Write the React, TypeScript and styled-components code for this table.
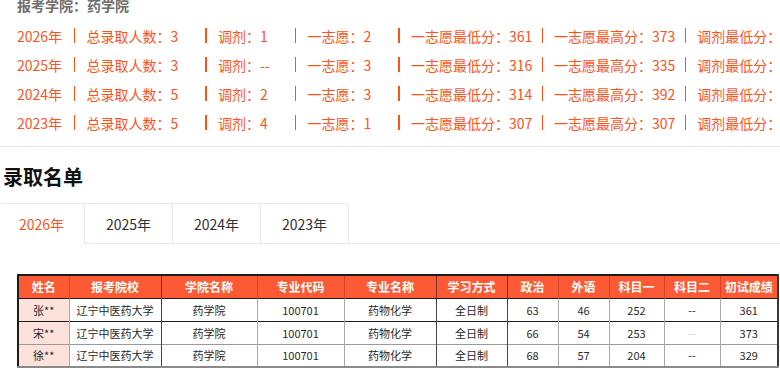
import React from "react";
import styled, { createGlobalStyle } from "styled-components";

const Global = createGlobalStyle`
  html, body { margin: 0; padding: 0; background: #fff; }
  body { width: 780px; height: 371px; overflow: hidden; font-family: "Noto Sans CJK SC", "Noto Sans", sans-serif; }
  * { box-sizing: border-box; }
`;

const ORANGE = "#ff5219";

const Page = styled.div`
  width: 780px;
`;

const Info = styled.div`
  padding-left: 17px;
`;

const College = styled.div`
  margin-top: -5px;
  height: 20px;
  line-height: 20px;
  font-size: 14px;
  font-weight: 700;
  color: #6e6e6e;
`;

const StatList = styled.div`
  margin-top: 6px;
`;

const StatRow = styled.div`
  display: flex;
  align-items: center;
  height: 29px;
  font-size: 14px;
  color: ${ORANGE};
  white-space: nowrap;
`;

const Item = styled.span<{ $w?: number }>`
  display: inline-block;
  min-width: ${(p) => (p.$w ? `${p.$w}px` : "0")};
  line-height: 20px;
`;

const Sep = styled.span`
  display: inline-block;
  width: 1.5px;
  height: 15px;
  margin: 0 11px;
  background: ${ORANGE};
`;

const Divider = styled.div`
  margin-top: 9px;
  height: 1px;
  background: #e8e8e8;
`;

const Title = styled.h2`
  margin: 16px 0 0;
  padding-left: 3px;
  height: 28px;
  line-height: 28px;
  font-size: 20px;
  font-weight: 700;
  color: #111;
`;

const TabBar = styled.div`
  display: flex;
  margin-top: 12px;
`;

const TabNav = styled.div`
  display: flex;
  margin-left: -2px;
  border: 1px solid #e4e7ed;
  border-bottom: none;
  border-radius: 4px 4px 0 0;
`;

const Tab = styled.div<{ $active?: boolean; $first?: boolean }>`
  width: ${(p) => (p.$first ? 85 : 88)}px;
  height: 40px;
  display: flex;
  align-items: center;
  justify-content: center;
  font-size: 14px;
  color: ${(p) => (p.$active ? ORANGE : "#303133")};
  border-left: ${(p) => (p.$first ? "none" : "1px solid #e4e7ed")};
  border-bottom: 1px solid ${(p) => (p.$active ? "#fff" : "#e4e7ed")};
`;

const TabFill = styled.div`
  flex: 1;
  border-bottom: 1px solid #e4e7ed;
`;

const Table = styled.table`
  margin: 30px 0 0 17px;
  border-collapse: collapse;
  table-layout: fixed;
  width: 760px;
  border-top: 2px solid #1c1c1c;
  border-left: 2px solid #1c1c1c;
  border-right: 2px solid #3a3a3a;
  border-bottom: 2px solid #8a8a8a;
`;

const Th = styled.th<{ $strong?: boolean }>`
  height: 23px;
  padding: 0;
  background: #fb5a35;
  color: #fff;
  font-size: 12px;
  font-weight: 700;
  text-align: center;
  border-left: 1px solid ${(p) => (p.$strong ? "#7a3020" : "#d2482a")};
`;

const Tr = styled.tr<{ $line: string }>`
  border-top: 1.5px solid ${(p) => p.$line};
`;

const Td = styled.td<{ $strong?: boolean; $name?: boolean; $faint?: boolean }>`
  height: 23px;
  padding: 0;
  text-align: center;
  font-size: 11px;
  color: ${(p) => (p.$faint ? "#d0d0d0" : "#2a2a2a")};
  background: ${(p) => (p.$name ? "#fde1db" : "#fff")};
  border-left: ${(p) => (p.$strong ? "1.5px solid #444" : "1px solid #a8a8a8")};
`;

const columns = [
  { title: "姓名", w: 51 },
  { title: "报考院校", w: 92 },
  { title: "学院名称", w: 96, strong: true },
  { title: "专业代码", w: 87 },
  { title: "专业名称", w: 92 },
  { title: "学习方式", w: 71, strong: true },
  { title: "政治", w: 51, strong: true },
  { title: "外语", w: 51 },
  { title: "科目一", w: 55 },
  { title: "科目二", w: 56 },
  { title: "初试成绩", w: 58 },
];

const stats = [
  { y: "2026年", total: 3, adj: "1", first: 2, low: 361, high: 373 },
  { y: "2025年", total: 3, adj: "--", first: 3, low: 316, high: 335 },
  { y: "2024年", total: 5, adj: "2", first: 3, low: 314, high: 392 },
  { y: "2023年", total: 5, adj: "4", first: 1, low: 307, high: 307 },
];

const rows = [
  { name: "张**", p: 63, f: 46, s1: 252, s2: "--", score: 361, line: "#1c1c1c", faint: false },
  { name: "宋**", p: 66, f: 54, s1: 253, s2: "--", score: 373, line: "#1c1c1c", faint: true },
  { name: "徐**", p: 68, f: 57, s1: 204, s2: "--", score: 329, line: "#9a9a9a", faint: false },
];

export default function App() {
  return (
    <Page>
      <Global />
      <Info>
        <College>报考学院：药学院</College>
        <StatList>
          {stats.map((s) => (
            <StatRow key={s.y}>
              <Item $w={46}>{s.y}</Item>
              <Sep />
              <Item $w={108}>总录取人数：{s.total}</Item>
              <Sep />
              <Item $w={66}>调剂：{s.adj}</Item>
              <Sep />
              <Item $w={80}>一志愿：{s.first}</Item>
              <Sep />
              <Item>一志愿最低分：{s.low}</Item>
              <Sep />
              <Item>一志愿最高分：{s.high}</Item>
              <Sep />
              <Item>调剂最低分：</Item>
            </StatRow>
          ))}
        </StatList>
      </Info>
      <Divider />
      <Title>录取名单</Title>
      <TabBar>
        <TabNav>
          <Tab $active $first>2026年</Tab>
          <Tab>2025年</Tab>
          <Tab>2024年</Tab>
          <Tab>2023年</Tab>
        </TabNav>
        <TabFill />
      </TabBar>
      <Table>
        <colgroup>
          {columns.map((c) => (
            <col key={c.title} style={{ width: c.w }} />
          ))}
        </colgroup>
        <thead>
          <tr>
            {columns.map((c) => (
              <Th key={c.title} $strong={c.strong}>{c.title}</Th>
            ))}
          </tr>
        </thead>
        <tbody>
          {rows.map((r) => (
            <Tr key={r.name} $line={r.line}>
              <Td $name>{r.name}</Td>
              <Td>辽宁中医药大学</Td>
              <Td $strong>药学院</Td>
              <Td>100701</Td>
              <Td>药物化学</Td>
              <Td $strong>全日制</Td>
              <Td $strong>{r.p}</Td>
              <Td>{r.f}</Td>
              <Td>{r.s1}</Td>
              <Td $faint={r.faint}>{r.s2}</Td>
              <Td>{r.score}</Td>
            </Tr>
          ))}
        </tbody>
      </Table>
    </Page>
  );
}
